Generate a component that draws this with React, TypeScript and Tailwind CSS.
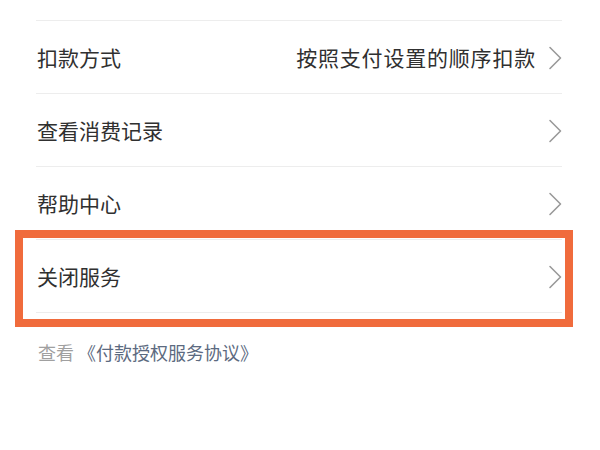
import React from "react";

const Chevron = () => (
  <svg width="14" height="24" viewBox="0 0 14 24" fill="none" className="shrink-0">
    <path d="M2 1.5 L12.5 12 L2 22.5" stroke="#9a9a9a" strokeWidth="1.6" strokeLinecap="round" strokeLinejoin="round" />
  </svg>
);

const rows: { label: string; value?: string }[] = [
  { label: "扣款方式", value: "按照支付设置的顺序扣款" },
  { label: "查看消费记录" },
  { label: "帮助中心" },
  { label: "关闭服务" },
];

export default function App() {
  return (
    <div
      className="relative w-[600px] h-[450px] bg-white overflow-hidden"
      style={{ fontFamily: '"Noto Sans CJK SC", "Noto Sans", sans-serif' }}
    >
      <div className="pt-[20px] pl-[36px] pr-[38px]">
        <div className="border-t border-[#ededed]">
          {rows.map((r) => (
            <div
              key={r.label}
              className="flex items-center justify-between h-[73px] pt-[2px] border-b border-[#ededed]"
            >
              <span className="text-[21px] text-[#303030] pl-[1px]">{r.label}</span>
              <div className="flex items-center gap-[12px]">
                {r.value && (
                  <span className="text-[21px] text-[#303030] tracking-[0.8px]">{r.value}</span>
                )}
                <Chevron />
              </div>
            </div>
          ))}
        </div>
        <div className="pt-[26px] text-[18px] leading-[26px] pl-[2px]">
          <span className="text-[#a0a0a0]">查看 </span>
          <span className="text-[#5c6a80]">《付款授权服务协议》</span>
        </div>
      </div>
      <div className="absolute left-[15px] top-[230px] w-[558px] h-[97px] border-[8px] border-[#f06b3c] pointer-events-none" />
    </div>
  );
}
